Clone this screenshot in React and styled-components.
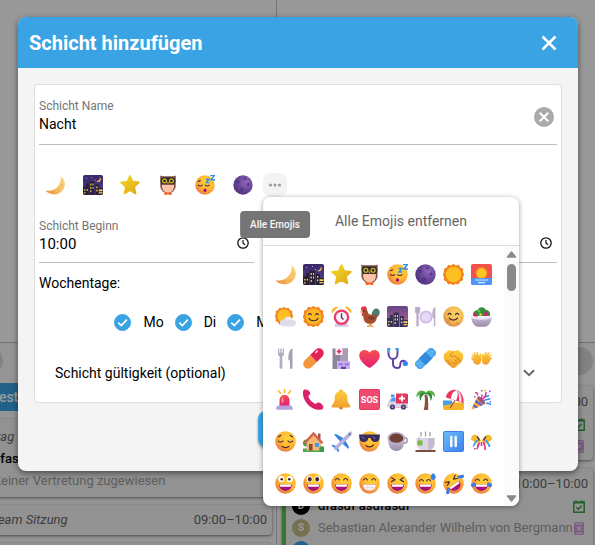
import React, { useState } from 'react';
import styled, { createGlobalStyle } from 'styled-components';

const GlobalStyle = createGlobalStyle`
*{
box-sizing:border-box;
}
body{
margin:0;
background:#fff;
font-family:Roboto,"Liberation Sans",sans-serif;
font-size:14px;
line-height:20px;
color:#000;
}
button,input{
font:inherit;
color:inherit;
}
`;

/* ---------- calendar in the background ---------- */

const Page = styled.div`
position:relative;
height:100vh;
overflow:hidden;
`;
const Board = styled.div`
display:grid;
grid-template-columns:317px 1fr;
margin-left:-40px;
height:100%;
background:#f9f9f9;
`;
const Column = styled.section`
border-right:${(props) => (props.$divided ? '1px solid #c4c4c4' : 'none')};
min-width:0;
`;
const DayHead = styled.div`
height:343px;
border-bottom:1px solid #bdbdbd;
background:#fff;
`;
const Entries = styled.div`
display:flex;
flex-direction:column;
gap:8px;
padding:4px ${(props) => (props.$right ? '2px 0 5px' : '4px 0 0')};
`;
const Round = styled.span`
width:28px;
height:28px;
margin:${(props) => (props.$end ? '0 0 3px' : '0 0 0 15px')};
border-radius:50%;
background:#d9d9d9;
align-self:${(props) => (props.$end ? 'flex-end' : 'flex-start')};
`;
const Chip = styled.div`
height:28px;
padding:4px 31px;
background:#3aa3e3;
color:#fff;
font-weight:500;
`;
const EventCard = styled.article`
padding:7px 5px 5px 11px;
border-radius:4px;
background:#f3f3f3;
box-shadow:0 1px 3px rgba(0,0,0,0.5);
`;
const FlatCard = styled(EventCard)`
padding:4px 5px 4px 11px;
`;
const ShiftCard = styled(EventCard)`
padding:5px 5px 3px 6px;
border-left:4px solid #5cc054;
`;
const EventRow = styled.div`
display:flex;
align-items:center;
gap:8px;
height:22px;
padding-left:${(props) => props.$indent || 0}px;
color:${(props) => (props.$muted ? '#9c9c9c' : '#000')};
font-size:13px;
font-weight:${(props) => (props.$strong ? 500 : 400)};
white-space:nowrap;
svg{
flex:none;
margin-right:3px;
}
`;
const Kind = styled.em`
color:#666;
`;
const Time = styled.span`
margin-left:auto;
color:#666;
`;
const Name = styled.span`
flex:1;
min-width:0;
`;
const Avatar = styled.span`
flex:none;
width:18px;
height:18px;
border-radius:50%;
background:${(props) => props.$color};
color:#fff;
font-size:10px;
font-weight:700;
line-height:18px;
text-align:center;
`;

/* ---------- dialog ---------- */

const Overlay = styled.div`
position:absolute;
inset:0;
display:flex;
align-items:flex-start;
justify-content:center;
padding:17px 17px 0 18px;
background:rgba(0,0,0,0.4);
`;
const Dialog = styled.form`
width:100%;
max-width:560px;
border-radius:8px;
background:#f4f4f4;
box-shadow:0 2px 6px rgba(0,0,0,0.5);
`;
const DialogHead = styled.header`
display:flex;
align-items:center;
justify-content:space-between;
height:51px;
padding:0 19px 0 11px;
border-radius:8px 8px 0 0;
background:#3aa3e3;
color:#fff;
`;
const Title = styled.h1`
margin:0;
font-size:20px;
font-weight:700;
line-height:24px;
`;
const IconButton = styled.button`
display:flex;
align-items:center;
justify-content:center;
padding:0;
border:none;
background:none;
cursor:pointer;
`;
const Card = styled.div`
margin:16px 16px 0;
padding:12px 4px 0;
border:1px solid #ddd;
border-radius:4px;
background:#fff;
`;
const Field = styled.div`
display:flex;
align-items:flex-end;
height:${(props) => (props.$tall ? 48 : 46)}px;
padding:${(props) => (props.$tall ? '0 3px 17px 0' : '0 5px 13px 0')};
border-bottom:1px solid #bdbdbd;
`;
const FieldText = styled.div`
flex:1;
min-width:0;
align-self:flex-start;
`;
const Label = styled.label`
display:block;
color:#757575;
font-size:12px;
line-height:18px;
`;
const Input = styled.input`
display:block;
width:100%;
height:18px;
padding:0;
border:none;
outline:none;
background:none;
font-size:${(props) => (props.$time ? 15 : 14)}px;
`;
const QuickEmojis = styled.div`
display:flex;
align-items:center;
gap:10px;
height:24px;
margin:28px 0 20px;
padding-left:6px;
`;
const QuickList = styled.div`
display:flex;
justify-content:space-between;
width:208px;
`;
const MoreWrap = styled.div`
position:relative;
`;
const MoreButton = styled(IconButton)`
width:24px;
height:24px;
border-radius:8px;
background:#f3f3f3;
color:#999;
`;
const Tooltip = styled.div`
position:absolute;
z-index:3;
top:38px;
left:50%;
transform:translateX(-50%);
padding:4px 10px;
border-radius:4px;
background:#757575;
color:#f5f5f5;
font-size:10px;
font-weight:500;
line-height:19px;
white-space:nowrap;
`;
const TimeRow = styled.div`
display:grid;
grid-template-columns:1fr 1fr;
gap:88px;
`;
const Days = styled.fieldset`
margin:0;
padding:0;
border:none;
`;
const DaysTitle = styled.legend`
padding:10px 0 0;
`;
const DayList = styled.div`
display:flex;
flex-wrap:wrap;
justify-content:center;
gap:2px 11px;
margin:19px 0 12px;
padding-left:12px;
`;
const Day = styled.label`
display:flex;
align-items:center;
gap:12px;
height:20px;
`;
const Check = styled.input`
appearance:none;
width:17px;
height:17px;
margin:0;
border:1px solid #3aa3e3;
border-radius:50%;
&:checked{
background:#3aa3e3 url("data:image/svg+xml,%3Csvg xmlns='http://www.w3.org/2000/svg' viewBox='0 0 15 15'%3E%3Cpath d='M3.3 7.6l3 3 5.6-6' fill='none' stroke='white' stroke-width='1.7'/%3E%3C/svg%3E") center no-repeat;
}
`;
const Validity = styled.button`
display:flex;
align-items:center;
justify-content:space-between;
width:100%;
height:58px;
padding:0 22px 0 16px;
border:none;
background:none;
color:#5f6b65;
`;
const ValidityText = styled.span`
color:#000;
`;
const DialogFoot = styled.footer`
display:flex;
justify-content:center;
padding:8px 0 24px;
`;
const SaveButton = styled.button`
width:80px;
height:36px;
padding:0;
border:none;
border-radius:8px;
background:#3aa3e3;
box-shadow:0 2px 3px rgba(0,0,0,0.35);
color:#fff;
`;

/* ---------- emoji popup ---------- */

const Popup = styled.div`
position:absolute;
z-index:2;
top:100%;
left:0;
width:256px;
border-radius:8px;
background:#fff;
box-shadow:0 1px 5px rgba(0,0,0,0.4);
overflow:hidden;
`;
const ClearAll = styled.button`
display:block;
width:100%;
height:49px;
padding:0 0 0 20px;
border:none;
border-bottom:1px solid #ddd;
background:none;
color:#666;
text-align:center;
`;
const PopupBody = styled.div`
display:flex;
height:260px;
`;
const EmojiGrid = styled.div`
flex:1;
display:grid;
grid-template-columns:repeat(8,28px);
grid-template-rows:repeat(6,1fr);
align-items:center;
padding:8px 0 2px 8px;
`;
const Scrollbar = styled.div`
display:flex;
flex-direction:column;
align-items:center;
width:15px;
padding:5px 0 4px;
background:#fbfbfb;
`;
const Thumb = styled.div`
width:9px;
height:27px;
margin:6px 0 auto;
border-radius:5px;
background:#8a8a8a;
`;

/* ---------- drawings ---------- */

const Gradients = () => (
  <svg width="0" height="0" style={{ display: 'block' }} aria-hidden="true">
    <defs>
      <radialGradient id="face" cx=".6" cy=".35" r=".68">
        <stop offset="0" stopColor="#ffd43c" />
        <stop offset=".6" stopColor="#ffb52f" />
        <stop offset="1" stopColor="#e9793f" />
      </radialGradient>
      <linearGradient id="gold" x1="0" y1="0" x2="1" y2="1">
        <stop offset="0" stopColor="#f5d823" />
        <stop offset="1" stopColor="#dda71b" />
      </linearGradient>
      <linearGradient id="moon" x1="1" y1="0" x2="0" y2="1">
        <stop offset="0" stopColor="#fbd987" />
        <stop offset=".6" stopColor="#f6ba5e" />
        <stop offset="1" stopColor="#e8853f" />
      </linearGradient>
      <radialGradient id="fullmoon" cx=".6" cy=".35" r=".7">
        <stop offset="0" stopColor="#fbd46b" />
        <stop offset=".6" stopColor="#f2b850" />
        <stop offset="1" stopColor="#d98a4a" />
      </radialGradient>
      <radialGradient id="purple" cx=".65" cy=".35" r=".7">
        <stop offset="0" stopColor="#9066ba" />
        <stop offset="1" stopColor="#4f3280" />
      </radialGradient>
      <linearGradient id="night" x1="0" y1="0" x2="0" y2="1">
        <stop offset="0" stopColor="#372868" />
        <stop offset="1" stopColor="#58419b" />
      </linearGradient>
      <linearGradient id="dusk" x1="0" y1="0" x2="0" y2="1">
        <stop offset="0" stopColor="#634683" />
        <stop offset="1" stopColor="#c46696" />
      </linearGradient>
      <linearGradient id="red" x1="0" y1="0" x2="0" y2="1">
        <stop offset="0" stopColor="#f5504f" />
        <stop offset="1" stopColor="#e5207b" />
      </linearGradient>
      <linearGradient id="hand" x1="0" y1="0" x2="0" y2="1">
        <stop offset="0" stopColor="#ffcc3a" />
        <stop offset="1" stopColor="#f0a02e" />
      </linearGradient>
      <linearGradient id="blue" x1="0" y1="0" x2="1" y2="1">
        <stop offset="0" stopColor="#6bbcff" />
        <stop offset="1" stopColor="#3d82e8" />
      </linearGradient>
      <linearGradient id="grey" x1="0" y1="0" x2="0" y2="1">
        <stop offset="0" stopColor="#cbbdd8" />
        <stop offset="1" stopColor="#9a8da9" />
      </linearGradient>
    </defs>
  </svg>
);

const Face = () => <circle cx="10.5" cy="10.5" r="10.2" fill="url(#face)" />;
const ink = { fill: 'none', stroke: '#4a2a35', strokeWidth: 1.2, strokeLinecap: 'round', strokeLinejoin: 'round' };
const Grin = () => (
  <>
    <path d="M4.2 11.6h12.6c0 3.8-2.6 6.3-6.3 6.3s-6.3-2.5-6.3-6.3z" fill="#a8127d" />
    <path d="M5 11.6h11v1.2c0 .6-.4 1-1 1H6c-.6 0-1-.4-1-1z" fill="#fff" />
  </>
);
const SunRays = () => (
  <path
    d="M10.5.2l2.3 1.900 2.900-.8 1.200 2.700 2.800 1-.2 3 1.300 2.500-1.400 2.600.1 3-2.800 1.200-1.300 2.600-2.900-.6-2 1.600-2.400-1.600-3 .6-1.200-2.700-2.800-1.200.3-3L.2 10.500l1.300-2.500-.2-3 2.800-1.100 1.200-2.600 2.900.7z"
    fill="#f18421"
    stroke="#f18421"
    strokeLinejoin="round"
  />
);
const Buildings = ({ body }) => (
  <>
    <path d="M0 12h3V9h3v12H2a2 2 0 0 1-2-2zM6.5 6.5H12V21H6.5zM13 10h4v11h-4zM16 14h5v5a2 2 0 0 1-2 2h-3z" fill={body} />
    <path d="M1.200 15h1.300v1.500H1.200zM3.800 15h1.300v1.500H3.800zM1.200 18h1.300v1.500H1.200zM7.600 9h1.200v2H7.600zM10 9h1v2h-1zM7.600 12.500h1.200v2H7.600zM10 12.500h1v2h-1zM7.600 16h1.200v2H7.600zM14 12h1.300v1.800H14zM14 15.500h1.300v1.800H14zM16.500 15.300h4V17h-4zM16.500 18h4v1.300h-4z" fill="#ffd35a" />
  </>
);
const Owl = () => (
  <>
    <path d="M2.5.5c2 .9 4 .8 8 .8s6 .1 8-.8c.5 4-.2 7 .1 10.500.1 4.500-3.300 8-8.100 8s-8.200-3.500-8.100-8C2.700 7.500 2 4.500 2.500.5z" fill="#785044" />
    <path d="M6 18h9l-1 3h-2.500l-1-1-1 1H7z" fill="#f36a2d" />
    <path d="M4.300 10h12.400c1 4.700-2 8.500-6.200 8.500S3.300 14.700 4.300 10z" fill="#ffc2aa" />
    <rect x="2.800" y="2.600" width="15.400" height="7.400" rx="3.500" fill="#352a2d" />
    <circle cx="6.900" cy="6.300" r="2" fill="#2c2431" stroke="#cdb81f" strokeWidth="1.300" />
    <circle cx="14.100" cy="6.300" r="2" fill="#2c2431" stroke="#cdb81f" strokeWidth="1.300" />
    <path d="M9.300 7.500h2.400l-1.200 2.500z" fill="#f5a623" />
  </>
);

const drawings = {
  Mondsichel: (
    <>
      <path d="M16.300 1.200C20 3.500 21.700 8 20.400 12.300 18.800 17.600 14 20.800 9 20.300 5.300 20 2 18.600.5 16.300c4.500.8 9-.2 12.300-3.500 3.200-3.300 4.300-7.500 3.500-11.600z" fill="url(#moon)" />
      <path d="M17.500 9.500l.9 1M14 16l1 .6M8.500 17.700l1.300.3" stroke="#e0903d" strokeWidth="1.100" />
    </>
  ),
  Nacht: (
    <>
      <rect width="21" height="21" rx="2" fill="url(#night)" />
      <Buildings body="#272039" />
      <path d="M17.700 2.200c1.600 1.200 1.500 3.900-.4 4.800-1.200.6-2.500.3-3.200-.6 2.400.2 4.100-1.500 3.600-4.200z" fill="#ffc04d" />
      <path d="M3 3h1v1H3zM9 2h1v1H9zM12 5h1v1h-1z" fill="#c4a2e8" />
    </>
  ),
  Stern: <path d="M10.500 1l2.800 6 6.600.8-4.900 4.700 1.300 7-5.800-3.400-5.800 3.400 1.300-7-4.900-4.700 6.600-.8z" fill="url(#gold)" stroke="url(#gold)" strokeWidth="1.700" strokeLinejoin="round" />,
  Eule: <Owl />,
  Schlafend: (
    <>
      <Face />
      <path d="M3.600 6.700l2-.9M3.500 10.600c1 1.200 3 1.200 4.200 0M10.800 10.600c1 1.200 3 1.200 4.200 0" {...ink} />
      <ellipse cx="10.500" cy="16" rx="1.600" ry="1.800" fill="#a3077c" />
      <path d="M16 .6h4.300L17 5h4M11.500 4.500h3.200L12 8h3.200" fill="none" stroke="#2d8dec" strokeWidth="1.500" />
    </>
  ),
  Neumond: (
    <>
      <circle cx="10.500" cy="10.500" r="10.200" fill="url(#purple)" />
      <g fill="#55378a">
        <circle cx="5" cy="7" r="2" />
        <circle cx="12.500" cy="4" r="1.300" />
        <circle cx="16" cy="10" r="1.500" />
        <circle cx="9" cy="15.500" r="2.200" />
        <circle cx="3.500" cy="12.500" r="1" />
      </g>
    </>
  ),
  Sonne: (
    <>
      <SunRays />
      <circle cx="10.500" cy="10.500" r="7.800" fill="#fdbf22" />
    </>
  ),
  Sonnenaufgang: (
    <>
      <rect width="21" height="21" rx="2" fill="#f1534a" />
      <circle cx="10.500" cy="9" r="6" fill="#f88b2c" />
      <circle cx="10.500" cy="9.300" r="4.800" fill="#ffc524" />
      <path d="M0 14h21v5a2 2 0 0 1-2 2H2a2 2 0 0 1-2-2z" fill="#4f93fa" />
      <path d="M4 16h13M7 18.700h7" stroke="#d0ebff" strokeWidth="1.200" />
    </>
  ),
  Wolkig: (
    <>
      <g transform="translate(0 1) scale(.86)">
        <SunRays />
        <circle cx="10.500" cy="10.500" r="7.800" fill="#fdbf22" />
      </g>
      <path d="M9 20.500c-2.300 0-4-1.500-4-3.500s1.700-3.500 3.800-3.400c.8-2 2.500-3.100 4.600-3.100 2.300 0 3.900 1.400 4.300 3.300 1.900 0 3.300 1.400 3.300 3.300s-1.500 3.400-3.600 3.400z" fill="#dedbea" />
      <path d="M9.500 14c1-2 2.500-2.700 4.300-2.500 1.700.2 2.700 1.200 3 3-2.500-1.500-5-1.500-7.300-.5z" fill="#f6f5fc" />
    </>
  ),
  Sonnengesicht: (
    <>
      <SunRays />
      <circle cx="10.500" cy="10.500" r="8" fill="#fbb825" />
      <path d="M5.500 8.500c.8-1.100 2-1.100 2.800 0M12.700 8.500c.8-1.100 2-1.100 2.800 0M6 12.500c1.700 3 7.300 3 9 0" {...ink} />
    </>
  ),
  Wecker: (
    <>
      <path d="M1 6.500C.8 3.200 3.200 1 6.500 1.200zM20 6.500c.2-3.300-2.200-5.500-5.500-5.300z" fill="#fbb52c" stroke="#fbb52c" strokeLinejoin="round" />
      <path d="M3 20.800l2.300-4h10.400l2.300 4z" fill="#d6c9e6" />
      <circle cx="10.500" cy="11.200" r="7.800" fill="#ea3b66" />
      <circle cx="10.500" cy="11.200" r="5.500" fill="#f5effa" />
      <path d="M10.500 7.200v4.400l2 1.900" fill="none" stroke="#5b2f4e" strokeWidth="1.300" />
    </>
  ),
  Hahn: (
    <>
      <path d="M12.500 9C13 4.500 15.500 2 18 2.500c2.800.6 3.500 4.500 1.800 7-1 1.600-2.500 2.500-4 2.500z" fill="#467d70" />
      <path d="M2 4C1.500 1.500 3 0 4.500.8 6-.4 8.200.8 7.800 3.500L6 6z" fill="#ee3553" />
      <path d="M3 4.500C4.500 2 8 2.300 8.600 5.500c.4 2.500 2.200 3.700 5.300 3.200 2.200-.3 3.700-.2 3.900 1 .6 4.300-2.300 8.200-6.500 8.200S4.800 15.500 4.500 12z" fill="#a64e2e" />
      <path d="M9 11c2.500-1 5.500-.6 7.500.5-1.200 2.800-5.500 3.800-7.500-.5z" fill="#7a3c33" />
      <path d="M2.800 4.500L.4 6l2.600 1z" fill="#f5b62e" />
      <path d="M2.800 7h2v3h-2z" fill="#ee3553" />
      <path d="M10.500 17.500V20l-2.500.6M12 17.500V20l2.600.6" fill="none" stroke="#f08a24" strokeWidth="1.200" />
      <circle cx="5.300" cy="5" r=".7" fill="#2c2431" />
    </>
  ),
  Abend: (
    <>
      <rect width="21" height="21" rx="2" fill="url(#dusk)" />
      <Buildings body="#373058" />
    </>
  ),
  Teller: (
    <>
      <path d="M.3 1v4.500c0 1.300.7 2 1.500 2.200V20h1.500V7.700c.8-.2 1.500-.9 1.500-2.200V1M2.500 1v5" fill="#b9aaca" stroke="#b9aaca" strokeWidth=".7" />
      <path d="M20.300 1c-2.500.8-3.400 5-2.700 11h1.200v8h1.500z" fill="#b9aaca" />
      <circle cx="11" cy="11" r="6.600" fill="#cfbfe8" />
      <circle cx="11" cy="11" r="4.600" fill="#e6daf7" />
    </>
  ),
  Vollmond: (
    <>
      <circle cx="10.500" cy="10.500" r="10.200" fill="url(#fullmoon)" />
      <circle cx="5" cy="15" r="2.200" fill="#df964a" />
      <circle cx="14.500" cy="17.500" r="1.500" fill="#df964a" />
      <path d="M5 8.500c.8-1.400 2.300-1.400 3.100 0M12.500 8.500c.8-1.400 2.300-1.400 3.100 0M6.300 12c1.500 2.800 6.700 2.800 8.200 0" {...ink} />
    </>
  ),
  Salat: (
    <>
      <path d="M2 10c-.5-3.500 2-6 4.500-5.700C8 .3 13.500.3 14.800 4c3-.2 4.900 2.500 4.200 6z" fill="#2f8f3e" />
      <path d="M3 6l4 4.500H3zM13 5l5 2-3 3z" fill="#d92068" />
      <circle cx="8" cy="5" r="1.500" fill="#64c046" />
      <circle cx="9.500" cy="8.500" r="1.300" fill="#fbcf3a" />
      <circle cx="14" cy="9" r="1.300" fill="#d92068" />
      <path d="M.4 10.500c5 1.800 15.200 1.800 20.200 0 .3 6-3 10.200-7.100 10.200h-6C3.400 20.700.1 16.500.4 10.500z" fill="url(#grey)" />
      <path d="M.4 10.500c5 1.800 15.200 1.800 20.200 0v1.800c-5 1.800-15.200 1.800-20.200 0z" fill="#eee8f5" />
    </>
  ),
  Besteck: (
    <>
      <path d="M3 .5h1.300v4.300h1V.5h1.400v4.300h1V.5H9v5.200c0 1.500-.8 2.500-1.800 2.900L7.500 19.700c0 1.400-3 1.400-3 0l.3-11.100C3.800 8.200 3 7.200 3 5.700z" fill="#b5abc2" />
      <path d="M17.500.5c-3 .5-4.300 4.500-4.100 11.800h1.500v7.600c0 1.200 2.600 1.200 2.600 0z" fill="#aaa0b8" />
    </>
  ),
  Tablette: (
    <g transform="rotate(-45 10.500 10.500)">
      <path d="M10.500 5.700H2.800a4.800 4.800 0 0 0 0 9.600h7.700z" fill="#f6963b" />
      <path d="M10.500 5.700h7.700a4.800 4.800 0 0 1 0 9.600h-7.700z" fill="#e22254" />
      <path d="M16.500 8h1.800" stroke="#ffd3de" strokeWidth="1.700" strokeLinecap="round" />
    </g>
  ),
  Krankenhaus: (
    <>
      <path d="M1.500.5H17V21H1.500z" fill="#8f8499" />
      <path d="M9 .5h8V21H9z" fill="#a99eb4" />
      <path d="M4.500 0h7v7h-7z" fill="#fbeef7" />
      <path d="M8 1.300v4.500M5.800 3.500h4.500" stroke="#e22254" strokeWidth="1.600" />
      <path d="M6 13h13v8H6z" fill="#c9b2f4" />
      <path d="M7.500 15h4.500v2.500H7.500zM13.500 15H18v2.500h-4.500z" fill="#a27fe0" />
      <path d="M10 18.800h5V21h-5z" fill="#6b4396" />
    </>
  ),
  Herz: <path d="M10.500 20C6 17.500.3 12.800.3 7.500c0-3.200 2.400-5.500 5.300-5.500 2 0 3.800 1 4.900 2.700C11.600 3 13.400 2 15.400 2c2.900 0 5.300 2.300 5.300 5.500 0 5.300-5.700 10-10.200 12.500z" fill="url(#red)" />,
  Stethoskop: (
    <>
      <path d="M3.200 1H1.500v4.500C1.500 8.800 3.500 11 6 11s4.500-2.200 4.500-5.500V1H8.700M6 11v4.500c0 2.800 1.600 4.500 4 4.500s3.300-1.600 3.300-3.600c0-2.300 1-3.600 2.700-3.600 1.500 0 2.400.6 2.600 1.500" fill="none" stroke="#5f3ca0" strokeWidth="1.900" />
      <path d="M1.500 4.500V1h1.700M8.700 1h1.800v2.500" fill="none" stroke="#3b9be9" strokeWidth="1.800" />
      <circle cx="18.300" cy="15.500" r="2.600" fill="#3383f0" />
    </>
  ),
  Pflaster: (
    <g transform="rotate(-45 10.500 10.500)">
      <rect x="-2" y="5.800" width="25" height="9.400" rx="4" fill="#50a9ef" />
      <rect x="6" y="5.800" width="9" height="9.400" fill="#3289dc" />
      <path d="M1 8.500h1M3.500 10.500h1M1 12.500h1M17 8.500h1M19.500 10.500h1M17 12.500h1" stroke="#a3d9ff" strokeWidth="1.100" />
    </g>
  ),
  Handschlag: (
    <>
      <path d="M1 6l5-4 4.500 1.300L15 2l5 4c1 4-.6 7.400-3.500 9.700L12 19.500c-1 .8-2.500.8-3.400 0L4 15.500C1.200 13.200 0 10 1 6z" fill="url(#hand)" />
      <path d="M10.500 3.300L7 7.300c1 1.800 2.800 1.500 4.300.2l6.500 5.700M14 10.500l3 3M12 12l3 3M10 14l2.500 2.500M3 12.500l3 1M5 15l3 1" fill="none" stroke="#d48421" strokeWidth="1" />
    </>
  ),
  Haende: (
    <g fill="url(#hand)">
      <path d="M10.200 12.500V6.300c0-1.100-1.500-1.200-1.700-.1l-.5 2.300L7 4.200c-.3-1-1.700-.8-1.600.3l.3 2.800-1.600-2.700c-.6-1-1.900-.2-1.400.8l1.200 2.800-1.800-1.500c-.9-.7-1.900.4-1.100 1.200L3 10 1 9.500c-1-.3-1.500 1-.6 1.500 2 1 2 5.500 5.600 5.700 2.400.2 4-1.500 4.200-4.200z" />
      <path d="M10.800 12.500V6.300c0-1.100 1.500-1.200 1.700-.1l.5 2.300 1-4.300c.3-1 1.700-.8 1.600.3l-.3 2.800 1.600-2.700c.6-1 1.900-.2 1.400.8l-1.200 2.800 1.800-1.500c.9-.7 1.900.4 1.100 1.200L18 10l2-.5c1-.3 1.500 1 .6 1.500-2 1-2 5.500-5.600 5.700-2.400.2-4-1.500-4.200-4.200z" />
    </g>
  ),
  Sirene: (
    <>
      <path d="M4.500 17V11.500c0-3.500 2-5.500 5-5.500s5 2 5 5.500V17z" fill="url(#red)" />
      <path d="M7.500 9v4" stroke="#ff9aa5" strokeWidth="1.500" strokeLinecap="round" />
      <path d="M9.500.7v2.800M3.500 1.800l2 2.700M15.500 1.800l-2 2.700" stroke="#f7bd2e" strokeWidth="1.600" strokeLinecap="round" />
      <path d="M3.500 16.500h12c1.500 0 2.300 2 2.300 4.200H1.200c0-2.200.8-4.200 2.300-4.200z" fill="#b6a0dc" />
    </>
  ),
  Telefon: <path d="M1 .8c2-1 5 .3 6 2.500.6 1.500-.3 2.900-1.700 3.700.8 3.300 3.800 6.600 7.400 8 .9-1.300 2.400-1.900 3.900-1.300 2.400 1 4.200 3.400 3.700 5.200-.7 2-4.600 2.500-8 1.400C5.800 18.300.8 12 0 5.500-.2 3 .1 1.300 1 .8z" fill="#d92269" />,
  Glocke: (
    <>
      <circle cx="10" cy="2.300" r="1.900" fill="#f2b12d" />
      <circle cx="10" cy="18.500" r="2.100" fill="#d98224" />
      <path d="M10 2c4 0 6.300 3 6.300 6.600 0 3.500.7 5.600 2.700 7.600.8.900.5 2.300-.7 2.300H1.700c-1.200 0-1.500-1.400-.7-2.300 2-2 2.700-4.100 2.700-7.600C3.700 5 6 2 10 2z" fill="url(#hand)" />
    </>
  ),
  SOS: (
    <>
      <rect width="21" height="21" rx="2" fill="#e8365f" />
      <rect x="1" y="1" width="19" height="19" rx="1.500" fill="#f04b6f" />
      <text x="10.500" y="13.800" textAnchor="middle" fill="#fff" fontSize="9" fontWeight="700">SOS</text>
    </>
  ),
  Krankenwagen: (
    <>
      <path d="M1 13.500L4 8h6v10.500H1.500L0 17z" fill="#ddd4ea" />
      <path d="M3 12.500L5 8.800h3.500v3.700z" fill="#4c9bee" />
      <path d="M9 4.500h10.500c.8 0 1.500.6 1.500 1.500v12.500H9z" fill="#e0375b" />
      <path d="M9 14.500h12v4H9z" fill="#ddd4ea" />
      <path d="M15 6.500v6M12 9.500h6" stroke="#fff" strokeWidth="1.800" />
      <circle cx="5.500" cy="18" r="2.600" fill="#433b6b" />
      <circle cx="16.500" cy="18" r="2.600" fill="#433b6b" />
      <circle cx="5.500" cy="18" r="1" fill="#aaa0c8" />
      <circle cx="16.500" cy="18" r="1" fill="#aaa0c8" />
      <path d="M4 5.500h3.500V8H4z" fill="#3e9bf5" />
    </>
  ),
  Palme: (
    <>
      <path d="M9.500 6c.8 4 .6 10-.8 15h4.500c.3-5 0-11-.9-15z" fill="#8b5340" />
      <path d="M11 6C8 4 4.500 4.500 1.500 8.500c-.5-4 2-7 5-7 2 0 3.500.8 4.500 2.200.7-1.400 2-2.200 4-2.200 3 0 5.500 3 5 7C17.500 4.500 14 4 11 6z" fill="#59b043" />
      <path d="M11 4.500c-3 1-5.300 3.500-5 7.500C3.700 9 4 5.500 6 4.200c1.600-1 3.500-.8 5 .3 1.300-1.100 2.900-1.300 4.500-.3 2 1.300 2.300 4.800 0 7.800.2-4-1.500-6.500-4.500-7.500z" fill="#2f8a3e" />
    </>
  ),
  Strand: (
    <>
      <path d="M0 13.500h21V19a2 2 0 0 1-2 2H2a2 2 0 0 1-2-2z" fill="#f6b42b" />
      <path d="M0 11.500h9V15l-9 1.500z" fill="#40a0ef" />
      <path d="M13 10l-6 9" stroke="#8a5545" strokeWidth="1.200" />
      <path d="M3 8.500C3.500 3 9-.2 14 1.200c4.500 1.300 7 7 6.500 12.800z" fill="#e8365f" />
      <path d="M8 10C8 5 10.500 1.800 14 1.200c1 3 1 7-1 10.400z" fill="#fff" />
      <path d="M13.900 1.200c3.600 2 5.300 6.500 4.600 11.800l-2.500-.6c.5-4.200-.3-8.700-2.100-11.200z" fill="#f4dce8" />
    </>
  ),
  Party: (
    <>
      <path d="M6.500 7.500L.7 19.300c-.4.8.4 1.400 1 1L14 15z" fill="#f8ac35" />
      <path d="M5 10.700l7 5.200-2 1L3.800 13zM2.700 15.200l4.500 3-2.200 1-3.200-2z" fill="#5563d8" />
      <ellipse cx="10.300" cy="11.300" rx="2" ry="5" transform="rotate(-45 10.300 11.300)" fill="#a4537e" />
      <path d="M10 10c1.700-2 .2-3.500 1.200-4.500M11.500 10.500C14 8 15.500 7 15 3M4 3.500c2 0 3 1 2.500 3" fill="none" stroke="#ea2f8c" strokeWidth="1.400" />
      <path d="M13 12c2-2.500 4-.5 6-2.500M14 8l4-1.500M15 14.500c2-1 3.500.5 5 1" fill="none" stroke="#328df0" strokeWidth="1.500" />
      <path d="M10 1h1.600v1.600H10zM18 1.500h1.600v1.600H18zM3 7h1.500v1.500H3zM18.500 12H20v1.500h-1.500z" fill="#8c5bdc" />
      <circle cx="14" cy="1.500" r="1" fill="#fbc22b" />
    </>
  ),
  Erleichtert: (
    <>
      <Face />
      <path d="M3.500 5.800l2.300-1.300M15.200 4.500l2.300 1.300M3.500 10c1 1.500 3.500 1.500 4.500 0M13 10c1 1.500 3.500 1.500 4.500 0M7 15.300c1.700 1.700 5.300 1.700 7 0" {...ink} />
    </>
  ),
  Haus: (
    <>
      <circle cx="3.500" cy="12" r="3.500" fill="#3a9b50" />
      <path d="M0 17.500h21V21H0z" fill="#4aab4e" />
      <path d="M15 2.500h2.500v6H15z" fill="#9b5a48" />
      <path d="M3.500 11L10.500 4l7.500 7v8.500H3.500z" fill="#f3b775" />
      <path d="M1.500 12.300l9-9.800 9 9.800" fill="none" stroke="#d46144" strokeWidth="2.300" />
      <path d="M6 13h3.500v6.500H6z" fill="#8b4b3e" />
      <path d="M12 12h4v4h-4z" fill="#459be8" />
      <circle cx="19" cy="18" r="2.800" fill="#3a9b50" />
    </>
  ),
  Flugzeug: (
    <>
      <path d="M3 3.500l2-.5 9 5-4 3.500zM17.500 18l.5-2-5-9-3.500 4z" fill="#3982dd" />
      <path d="M.5 14.500l1.200-.8 5 1.700 1.500 4.800-.8 1-3-3.400z" fill="#3982dd" />
      <path d="M20.500.5c1 2-.3 4-2 5.700L7.500 17c-1.700 1.600-3.300 2.500-4.200 1.700-.8-.9.100-2.500 1.700-4.200L15.800 3.500C17.300 2 18.500.2 20.500.5z" fill="#b7b2dc" />
      <path d="M18 2.500l1.500 1.500" stroke="#4c6fae" strokeWidth="1.500" />
    </>
  ),
  Cool: (
    <>
      <Face />
      <path d="M0 3.500h21l-.5 4c-.3 2.300-1.700 3.500-4.300 3.500-2.700 0-4.200-1.500-4.600-4H9.400c-.4 2.500-1.900 4-4.600 4C2.200 11 .8 9.800.5 7.500z" fill="#362c5c" />
      <path d="M3 5.500l2.500 2.500M14 5.500l2.500 2.500" stroke="#66569d" strokeWidth="1.200" />
      <path d="M7 14.500c2 2 5.500 1.900 7.500-.7" {...ink} />
    </>
  ),
  Kaffee: (
    <>
      <circle cx="17.500" cy="9.500" r="2.700" fill="none" stroke="#9b91ab" strokeWidth="1.400" />
      <path d="M1 8h16.500c0 7-2.500 12-8.200 12S1 15 1 8z" fill="url(#grey)" />
      <ellipse cx="9.300" cy="7" rx="9" ry="6" fill="#bdb3ca" />
      <ellipse cx="9.300" cy="7.200" rx="7" ry="4.600" fill="#714139" />
    </>
  ),
  Tee: (
    <>
      <path d="M6 1v4.500M10.500.5V5.500M15 1v4.500" stroke="#a69cb2" strokeWidth="1.300" />
      <path d="M.5 19h20v2H.5z" fill="#79503f" />
      <path d="M1.500 7h18v5.500c0 4-2.500 6.500-6 6.500h-6c-3.500 0-6-2.500-6-6.500z" fill="#dcd5e4" />
      <path d="M13 7h6.500v5.500c0 4-2.500 6.500-6 6.500z" fill="#c5bad2" />
      <path d="M4 6v4" stroke="#a69cb2" strokeWidth=".8" />
      <path d="M2.500 9.500h5v5h-5z" fill="#79b93f" />
    </>
  ),
  Pause: (
    <>
      <rect width="21" height="21" rx="2" fill="#3d82e2" />
      <rect x="1" y="1" width="19" height="19" rx="1.500" fill="url(#blue)" />
      <path d="M8.300 6v9M12.700 6v9" stroke="#fff" strokeWidth="2.400" strokeLinecap="round" />
    </>
  ),
  Konfetti: (
    <>
      <path d="M0 8.500C-.3 5 2.500 3 5.500 4l4.500 5c-.5 3-2.500 4-5.500 2.700zM21 8.500c.3-3.500-2.500-5.500-5.500-4.500L11 9c.5 3 2.500 4 5.500 2.700z" fill="#f5bb2c" />
      <path d="M6 5.500c1 1 2 2.500 2.300 4M15 5.500c-1 1-2 2.500-2.300 4" stroke="#5b3350" strokeWidth="1.600" />
      <path d="M6 9c-1 3-3 3-3.500 6.500M15 9c1 3 3 3 3.500 7M7 13v3" fill="none" stroke="#359ae8" strokeWidth="1.700" />
      <path d="M8.500 11.500L6 18M12.500 11c.5 3 2 3 1.500 8M10.500 11v4M4 17v1.500" fill="none" stroke="#e52f80" strokeWidth="1.600" />
    </>
  ),
  Grinsend: (
    <>
      <Face />
      <circle cx="6.200" cy="6" r="3.100" fill="#fff" />
      <circle cx="14.800" cy="6" r="3.100" fill="#fff" />
      <circle cx="6.700" cy="6.200" r="1.300" fill="#3e2733" />
      <circle cx="14.300" cy="6.200" r="1.300" fill="#3e2733" />
      <Grin />
    </>
  ),
  Lachend: (
    <>
      <Face />
      <circle cx="6.500" cy="6" r="3" fill="#fff" />
      <circle cx="14.500" cy="6" r="3" fill="#fff" />
      <ellipse cx="6.800" cy="6.200" rx="1.900" ry="2.300" fill="#3e2733" />
      <ellipse cx="14.200" cy="6.200" rx="1.900" ry="2.300" fill="#3e2733" />
      <Grin />
    </>
  ),
  Froh: (
    <>
      <Face />
      <path d="M4.500 7c.8-2 3-2 3.800 0M12.700 7c.8-2 3-2 3.800 0" {...ink} />
      <Grin />
    </>
  ),
  Strahlend: (
    <>
      <Face />
      <path d="M4.500 7c.8-2 3-2 3.800 0M12.700 7c.8-2 3-2 3.800 0" {...ink} />
      <path d="M4 11.500h13c0 3.800-2.500 6.200-6.500 6.200S4 15.300 4 11.500z" fill="#fff" stroke="#d98b8d" strokeWidth=".5" />
      <path d="M4.500 14.300h12M8 11.700V17M10.500 11.700v5.800M13 11.700V17" stroke="#dccbd6" strokeWidth=".6" />
    </>
  ),
  Zusammengekniffen: (
    <>
      <Face />
      <path d="M4.500 4.800l3.500 2-3.500 1.800M16.500 4.800l-3.500 2 3.500 1.800" {...ink} />
      <Grin />
    </>
  ),
  Schwitzend: (
    <>
      <Face />
      <path d="M4.500 8c.8-2 3-2 3.800 0M11.700 8c.8-2 3-2 3.800 0" {...ink} />
      <Grin />
      <path d="M18.200.3c1.400 0 2.500 2.500 2.500 4S19.600 7 18.200 7s-2.500-1.200-2.500-2.700 1.100-4 2.500-4z" fill="#3382e8" />
    </>
  ),
  Kugelnd: (
    <>
      <g transform="rotate(-35 10.500 10.500)">
        <Face />
        <path d="M4.500 4.800l3.500 2-3.500 1.800M16.500 4.800l-3.500 2 3.500 1.800" {...ink} />
        <Grin />
      </g>
      <path d="M14.500 3l5.500-1.400c1.400.2 1.200 3 0 3.300l-5.300.6zM4.300 14.500l2.200.6-.3 4.800c-.7 1.900-3 1.700-3.200 0z" fill="#4077e4" />
    </>
  ),
  Traenen: (
    <>
      <Face />
      <path d="M4.500 7.500c.8-2 3-2 3.800 0M12.700 7.500c.8-2 3-2 3.800 0" {...ink} />
      <Grin />
      <path d="M4.800 9.500c.3 2.500-1 4.600-3 4.700C.3 14.300-.6 12.500.3 11.200c.7-1.200 2.300-1.700 4.500-1.700zM16.200 9.500c-.3 2.500 1 4.600 3 4.700 1.500.1 2.400-1.700 1.500-3-.7-1.200-2.300-1.700-4.500-1.700z" fill="#3f7ce8" />
    </>
  ),
};

const quickEmojis = Object.keys(drawings).slice(0, 6);
const days = ['Mo', 'Di', 'Mi', 'Do', 'Fr', 'Sa', 'So'];

const Emoji = ({ name, size }) => (
  <IconButton type="button" aria-label={name}>
    <svg width={size} height={size} viewBox="0 0 21 21">{drawings[name]}</svg>
  </IconButton>
);

const Cross = () => (
  <svg width="20" height="20" viewBox="0 0 20 20">
    <path d="M3.500 3.500l13 13M16.500 3.500l-13 13" stroke="currentColor" strokeWidth="2.500" />
  </svg>
);

const Clock = () => (
  <svg width="12" height="12" viewBox="0 0 12 12">
    <circle cx="6" cy="6" r="5.200" fill="none" stroke="#111" strokeWidth="1.300" />
    <path d="M6 3v3.200l2.200 1.500" fill="none" stroke="#111" strokeWidth="1.200" />
  </svg>
);

const CalendarCheck = () => (
  <svg width="12" height="13" viewBox="0 0 12 13">
    <path d="M.8 2h10.400v10.200H.8zM3 .2V3M9 .2V3" fill="none" stroke="#3d9e4a" strokeWidth="1.500" />
    <path d="M.8 2.800h10.400M3.300 7.300l2 2 3.500-3.600" fill="none" stroke="#3d9e4a" strokeWidth="1.500" />
  </svg>
);

const MedicalFile = () => (
  <svg width="12" height="13" viewBox="0 0 12 13">
    <rect x="1" width="10" height="13" rx="1.500" fill="#d09cdb" />
    <path d="M2.500 1.800h7M2.500 11.200h7" stroke="#f3f3f3" strokeWidth="1" />
    <path d="M6 4v5M3.800 5.200l4.400 2.600M8.200 5.200L3.800 7.800" stroke="#f3f3f3" strokeWidth="1" />
  </svg>
);

const TimeField = ({ id, label, value }) => (
  <Field>
    <FieldText>
      <Label htmlFor={id}>{label}</Label>
      <Input id={id} $time defaultValue={value} />
    </FieldText>
    <Clock />
  </Field>
);

const Calendar = () => (
  <Board>
    <Column $divided>
      <DayHead />
      <Entries>
        <Round />
        <Chip>Tests</Chip>
        <EventCard>
          <EventRow><Kind>Montag</Kind></EventRow>
          <EventRow $strong $indent={22}>dfasdf</EventRow>
          <EventRow $muted $indent={22}>Keiner Vertretung zugewiesen</EventRow>
        </EventCard>
        <FlatCard>
          <EventRow $indent={20}><Kind>Team Sitzung</Kind><Time>09:00–10:00</Time></EventRow>
        </FlatCard>
        <FlatCard><EventRow /></FlatCard>
      </Entries>
    </Column>
    <Column>
      <DayHead />
      <Entries $right>
        <Round $end />
        <ShiftCard>
          <EventRow><Time>10:00–10:00</Time></EventRow>
          <EventRow $strong><Name /><CalendarCheck /></EventRow>
          <EventRow $muted><Name /><MedicalFile /></EventRow>
        </ShiftCard>
        <ShiftCard>
          <EventRow><Time>10:00–10:00</Time></EventRow>
          <EventRow $strong>
            <Avatar $color="#000">D</Avatar>
            <Name>dfasdf asdfasdf</Name>
            <CalendarCheck />
          </EventRow>
          <EventRow $muted>
            <Avatar $color="#c4bb80">S</Avatar>
            <Name>Sebastian Alexander Wilhelm von Bergmann</Name>
            <MedicalFile />
          </EventRow>
          <EventRow><Avatar $color="#3aa3e3" /></EventRow>
        </ShiftCard>
      </Entries>
    </Column>
  </Board>
);

const EmojiPopup = () => (
  <Popup>
    <ClearAll type="button">Alle Emojis entfernen</ClearAll>
    <PopupBody>
      <EmojiGrid>
        {Object.keys(drawings).map((name) => (
          <Emoji key={name} name={name} size={21} />
        ))}
      </EmojiGrid>
      <Scrollbar>
        <svg width="11" height="7" viewBox="0 0 11 7"><path d="M5.500 1l4 5h-8z" fill="#8a8a8a" stroke="#8a8a8a" strokeWidth="1.500" strokeLinejoin="round" /></svg>
        <Thumb />
        <svg width="11" height="7" viewBox="0 0 11 7"><path d="M5.500 6l4-5h-8z" fill="#8a8a8a" stroke="#8a8a8a" strokeWidth="1.500" strokeLinejoin="round" /></svg>
      </Scrollbar>
    </PopupBody>
  </Popup>
);

const App = () => {
  const [name, setName] = useState('Nacht');

  return (
    <Page>
      <GlobalStyle />
      <Gradients />
      <Calendar />
      <Overlay>
        <Dialog>
          <DialogHead>
            <Title>Schicht hinzufügen</Title>
            <IconButton type="button" aria-label="Schließen"><Cross /></IconButton>
          </DialogHead>
          <Card>
            <Field $tall>
              <FieldText>
                <Label htmlFor="name">Schicht Name</Label>
                <Input id="name" value={name} onChange={(e) => setName(e.target.value)} />
              </FieldText>
              <IconButton type="button" aria-label="Leeren" onClick={() => setName('')}>
                <svg width="20" height="20" viewBox="0 0 20 20">
                  <circle cx="10" cy="10" r="10" fill="#aaa" />
                  <path d="M5.800 5.800l8.400 8.400M14.200 5.800l-8.400 8.400" stroke="#fff" strokeWidth="2" />
                </svg>
              </IconButton>
            </Field>
            <QuickEmojis>
              <QuickList>
                {quickEmojis.map((item) => (
                  <Emoji key={item} name={item} size={20} />
                ))}
              </QuickList>
              <MoreWrap>
                <MoreButton type="button" aria-label="Alle Emojis">
                  <svg width="12" height="4" viewBox="0 0 12 4" fill="currentColor">
                    <circle cx="1.500" cy="2" r="1.500" />
                    <circle cx="6" cy="2" r="1.500" />
                    <circle cx="10.500" cy="2" r="1.500" />
                  </svg>
                </MoreButton>
                <Tooltip role="tooltip">Alle Emojis</Tooltip>
                <EmojiPopup />
              </MoreWrap>
            </QuickEmojis>
            <TimeRow>
              <TimeField id="start" label="Schicht Beginn" value="10:00" />
              <TimeField id="end" label="Schicht Ende" value="18:00" />
            </TimeRow>
            <Days>
              <DaysTitle>Wochentage:</DaysTitle>
              <DayList>
                {days.map((day) => (
                  <Day key={day}>
                    <Check type="checkbox" defaultChecked />
                    {day}
                  </Day>
                ))}
              </DayList>
            </Days>
            <Validity type="button">
              <ValidityText>Schicht gültigkeit (optional)</ValidityText>
              <svg width="12" height="8" viewBox="0 0 12 8">
                <path d="M1 1.200l5 5 5-5" fill="none" stroke="currentColor" strokeWidth="2" />
              </svg>
            </Validity>
          </Card>
          <DialogFoot>
            <SaveButton type="submit">Speichern</SaveButton>
          </DialogFoot>
        </Dialog>
      </Overlay>
    </Page>
  );
};

export default App;
